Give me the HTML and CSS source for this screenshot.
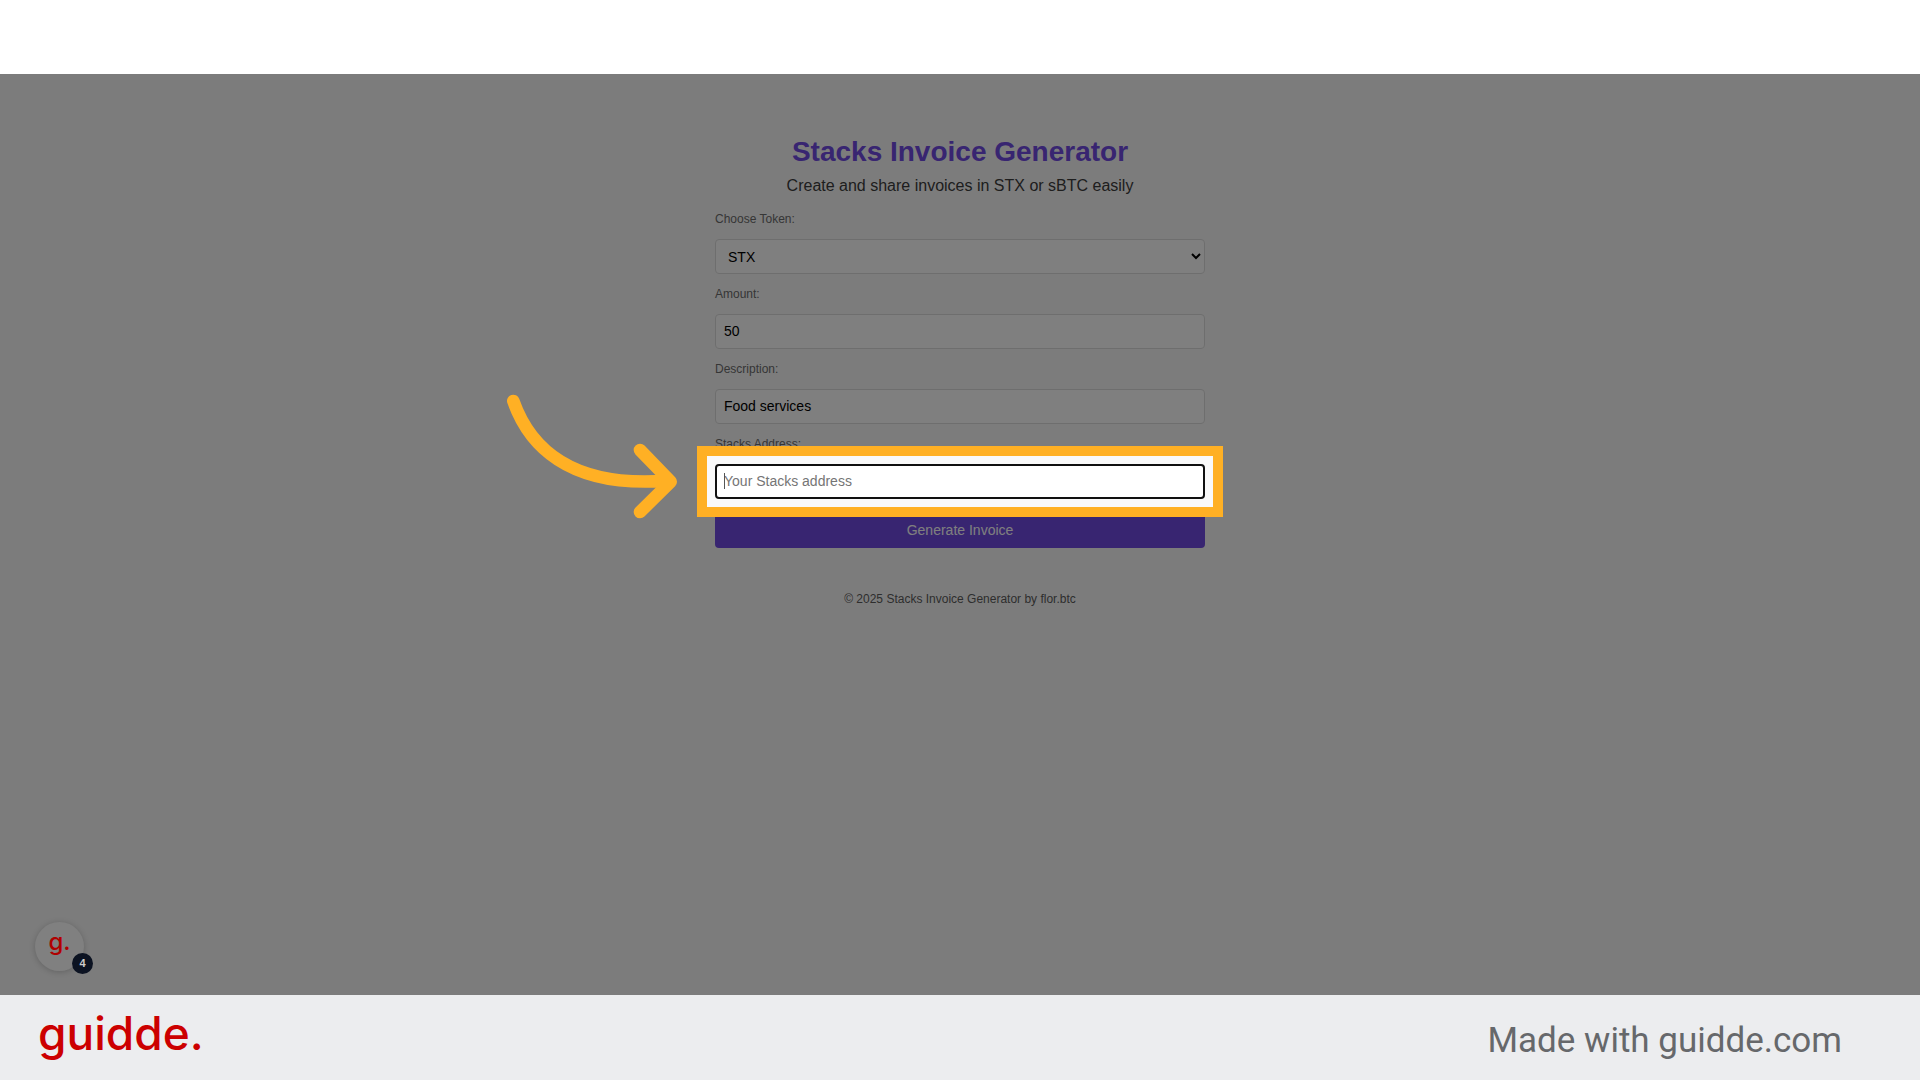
FILE: index.html
```html
<!DOCTYPE html>
<html lang="en">
<head>
  <meta charset="UTF-8" />
  <meta name="viewport" content="width=device-width, initial-scale=1.0" />
  <title>Stacks Invoice Generator</title>
  <link rel="stylesheet" href="styles.css">
</head>
<body>
  <main class="stage">
    <div class="container">
      <h1>Stacks Invoice Generator</h1>
      <p class="subtitle">Create and share invoices in STX or sBTC easily</p>

      <form class="invoice-form">
        <label for="token">Choose Token:</label>
        <select id="token">
          <option>STX</option>
          <option>sBTC</option>
        </select>

        <label for="amount">Amount:</label>
        <input type="text" id="amount" value="50">

        <label for="description">Description:</label>
        <input type="text" id="description" value="Food services">

        <label for="address">Stacks Address:</label>
        <div class="active-field">
          <input type="text" id="address" placeholder="Your Stacks address">
          <span class="caret"></span>
          <div class="spotlight"></div>
          <svg class="arrow" viewBox="0 0 660 450" aria-hidden="true">
            <path d="M70 63 C115 190 230 325 530 302" />
            <path d="M450 210 L542 305 L450 396" />
          </svg>
        </div>

        <button type="button">Generate Invoice</button>
      </form>

      <p class="copyright">© 2025 Stacks Invoice Generator by flor.btc</p>
    </div>

    <div class="widget">
      <span class="widget-logo">g.</span>
      <span class="widget-badge">4</span>
    </div>
  </main>

  <footer class="footer">
    <div class="logo">guidde.</div>
    <div class="made-with">Made with guidde.com</div>
  </footer>
</body>
</html>
```

FILE: styles.css
```css
* {
  box-sizing: border-box;
}

body {
  margin: 0;
  padding-top: 74px;
  min-height: 100vh;
  display: flex;
  flex-direction: column;
  background: #fff;
  font-family: "Liberation Sans", Arial, sans-serif;
}

/* app page, dimmed by the spotlight shadow */
.stage {
  position: relative;
  flex: 1;
  overflow: hidden;
  padding: 62px 20px 0;
  background: #f9f9f9;
}

.container {
  max-width: 490px;
  margin: 0 auto;
  text-align: center;
}

h1 {
  margin: 0;
  font-size: 28px;
  line-height: 32px;
  color: #704ae2;
}

.subtitle {
  margin: 8px 0 16px;
  font-size: 16px;
  line-height: 20px;
  color: #3c3c3c;
}

.invoice-form {
  display: flex;
  flex-direction: column;
  gap: 13px;
  text-align: left;
}

label {
  font-size: 12px;
  line-height: 14px;
  color: #6c6c6c;
}

input,
select {
  display: block;
  width: 100%;
  height: 35px;
  padding: 8px;
  border: 1px solid #ddd;
  border-radius: 4px;
  background: #fff;
  color: #000;
  font-family: inherit;
  font-size: 14px;
}

input {
  padding-bottom: 10px;
}

button {
  height: 36px;
  border: none;
  border-radius: 4px;
  background: #704ae2;
  color: #fff;
  font-family: inherit;
  font-size: 14px;
}

.copyright {
  margin: 43px 0 0;
  font-size: 12px;
  line-height: 16px;
  color: #5c5c5c;
}

.active-field {
  position: relative;
}

.active-field input {
  border: 2px solid #101010;
  padding: 7px 7px 9px;
}

.active-field input::placeholder {
  color: #757575;
}

.caret {
  position: absolute;
  top: 9px;
  left: 9px;
  width: 1px;
  height: 16px;
  background: #555;
}

.spotlight {
  position: absolute;
  inset: -18px;
  z-index: 1;
  border: 10px solid #ffb024;
  box-shadow: 0 0 0 3000px rgba(0, 0, 0, 0.5);
  pointer-events: none;
}

.arrow {
  position: absolute;
  top: -84px;
  left: -225px;
  z-index: 2;
  width: 220px;
  height: 150px;
  fill: none;
  stroke: #ffb024;
  stroke-width: 38;
  stroke-linecap: round;
  stroke-linejoin: round;
}

.widget {
  position: absolute;
  left: 35px;
  bottom: 24px;
  z-index: 3;
  display: flex;
  justify-content: center;
  width: 49px;
  height: 49px;
  border-radius: 50%;
  background: #808080;
  box-shadow: 0 1px 6px rgba(0, 0, 0, 0.2);
}

.widget-logo {
  font-family: Inter, sans-serif;
  font-size: 24px;
  font-weight: 500;
  line-height: 40px;
  color: #b00000;
}

.widget-badge {
  position: absolute;
  right: -9px;
  bottom: -3px;
  width: 21px;
  height: 21px;
  border-radius: 50%;
  background: #0c1322;
  color: #ccc;
  font-size: 11px;
  font-weight: bold;
  line-height: 21px;
  text-align: center;
}

.footer {
  display: flex;
  justify-content: space-between;
  align-items: center;
  height: 85px;
  padding: 0 78px 0 38px;
  background: #ecedef;
}

.logo {
  padding-bottom: 10px;
  font-family: Inter, sans-serif;
  font-size: 46px;
  font-weight: 500;
  line-height: 60px;
  color: #c00;
}

.made-with {
  padding-top: 6px;
  font-family: Roboto, sans-serif;
  font-size: 35px;
  line-height: 42px;
  color: #66686b;
}
```
